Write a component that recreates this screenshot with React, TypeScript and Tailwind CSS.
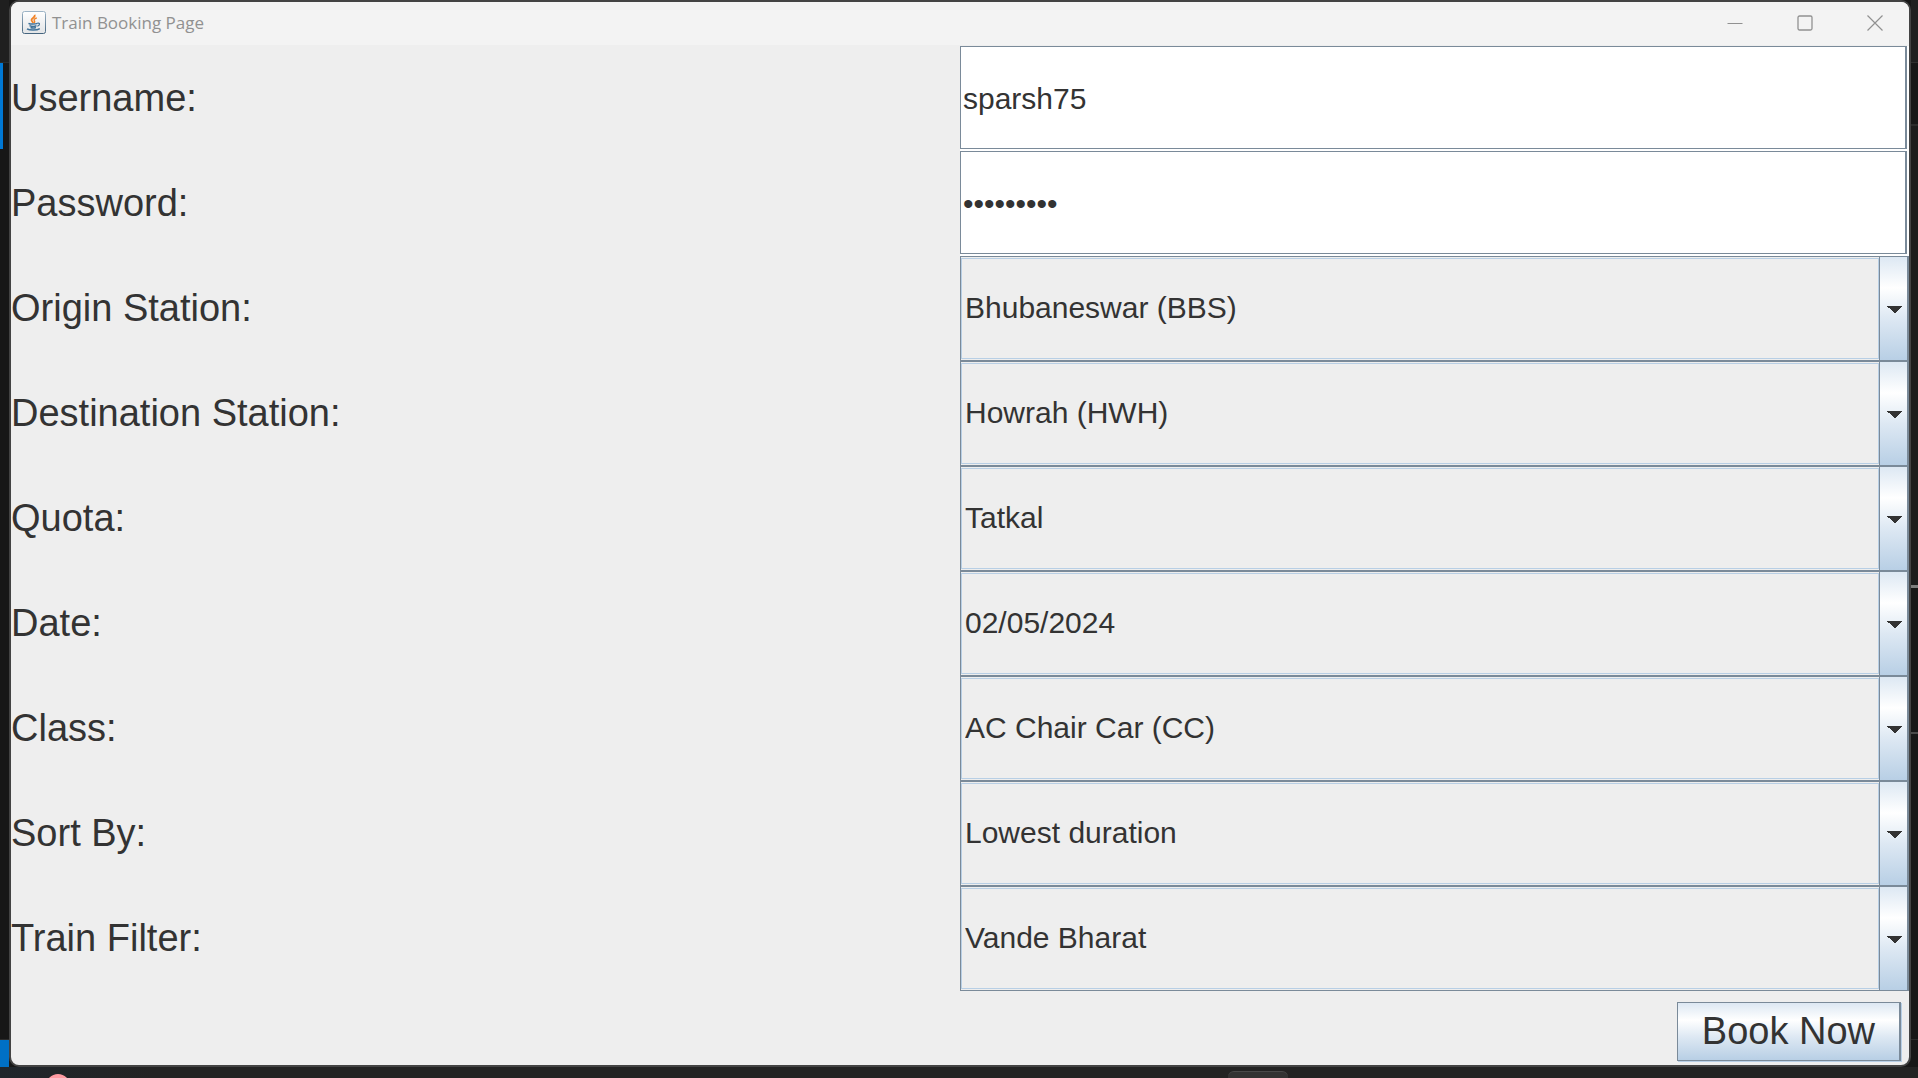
import { useState } from "react";

const fields = [
  { id: "origin", label: "Origin Station:", options: ["Bhubaneswar (BBS)", "Howrah (HWH)"], initial: "Bhubaneswar (BBS)" },
  { id: "destination", label: "Destination Station:", options: ["Howrah (HWH)", "Bhubaneswar (BBS)"], initial: "Howrah (HWH)" },
  { id: "quota", label: "Quota:", options: ["Tatkal"], initial: "Tatkal" },
  { id: "date", label: "Date:", options: ["02/05/2024"], initial: "02/05/2024" },
  { id: "class", label: "Class:", options: ["AC Chair Car (CC)"], initial: "AC Chair Car (CC)" },
  { id: "sort", label: "Sort By:", options: ["Lowest duration"], initial: "Lowest duration" },
  { id: "filter", label: "Train Filter:", options: ["Vande Bharat"], initial: "Vande Bharat" },
];

const metal = "bg-[linear-gradient(to_bottom,#dde8f3_0%,#ffffff_30%,#dde8f3_60%,#b8cfe5_100%)]";

function FieldLabel({ id, children }: { id: string; children: string }) {
  return (
    <label htmlFor={id} className="flex h-[105px] items-center pb-0.5 text-[38px] leading-none whitespace-nowrap">
      {children}
    </label>
  );
}

function TextField({ id, type, initial }: { id: string; type: string; initial: string }) {
  const [value, setValue] = useState(initial);
  return (
    <div className="h-[105px] bg-white pr-0.5 pb-0.5">
      <input
        id={id}
        type={type}
        value={value}
        onChange={(e) => setValue(e.target.value)}
        className="block h-full w-full border border-r-2 border-[#7a8a99] bg-white pt-0.5 pl-0.5 text-[30px] outline-none"
      />
    </div>
  );
}

function ComboBox({ id, options, initial }: { id: string; options: string[]; initial: string }) {
  const [value, setValue] = useState(initial);
  return (
    <div className="flex h-[105px] border border-r-2 border-[#7a8a99]">
      <div className="min-w-0 flex-1 pt-px pb-px">
        <select
          id={id}
          value={value}
          onChange={(e) => setValue(e.target.value)}
          className="block h-full w-full appearance-none border border-[#b8cfe5] bg-[#eeeeee] pb-0.5 pl-[3px] text-[30px] outline-none"
        >
          {options.map((o) => (
            <option key={o}>{o}</option>
          ))}
        </select>
      </div>
      <div aria-hidden="true" className={`flex w-7 items-center justify-end border-l border-[#7a8a99] pt-0.5 pr-[5px] ${metal}`}>
        <svg width="15" height="7" viewBox="0 0 15 7" shapeRendering="crispEdges">
          <path d="M0 0H15V1H14V2H13L8 7H7L2 2H1V1H0Z" fill="#333333" />
        </svg>
      </div>
    </div>
  );
}

function JavaIcon() {
  return (
    <svg width="24" height="24" viewBox="0 0 24 24" fill="none" aria-hidden="true">
      <defs>
        <linearGradient id="frame" x1="0" y1="0" x2="0" y2="1">
          <stop offset="0" stopColor="#9db4c6" />
          <stop offset="1" stopColor="#45657f" />
        </linearGradient>
        <linearGradient id="tile" x1="0" y1="0" x2="0" y2="1">
          <stop offset="0" stopColor="#ffffff" />
          <stop offset="1" stopColor="#e2e4e6" />
        </linearGradient>
      </defs>
      <rect x="0.5" y="0.5" width="23" height="22" rx="2" fill="url(#tile)" stroke="url(#frame)" />
      <path d="M12.8 3.800C13.500 6.500 9.200 7.200 9.500 9.200C9.700 10.300 11 10.800 11.200 12" stroke="#f08226" strokeWidth="1.800" />
      <path d="M14.800 6.800C12 7.800 11.500 8.800 12.500 10C13 10.700 12.800 11.400 12.200 12" stroke="#f08226" strokeWidth="1.300" />
      <path d="M6.500 12.300C8 13.300 13.500 13.300 15.500 12.300M7.500 14.600C9.500 15.500 12.800 15.500 14.500 14.600M8.500 16.500C10 17.200 12.300 17.200 14 16.500" stroke="#3f7299" strokeWidth="1.400" />
      <path d="M15.300 12.200C18.300 11.300 18.200 14.400 15.300 15.300" stroke="#3f7299" strokeWidth="1.200" />
      <path d="M5 17.800C7.500 19.500 15 19.500 17.800 17.600" stroke="#3f7299" strokeWidth="1.400" />
    </svg>
  );
}

function TitleBar() {
  return (
    <header className="flex h-[43px] items-center justify-between bg-[#f3f3f3] pr-[26px] pl-[11px] text-[#919191]">
      <div className="flex items-center gap-1.5 pb-0.5">
        <JavaIcon />
        <h1 className="font-['Open_Sans','Noto_Sans',sans-serif] text-[17px] leading-6">Train Booking Page</h1>
      </div>
      <div className="flex items-center gap-[54px] pb-0.5">
        <button type="button" aria-label="Minimize">
          <svg width="16" height="16" viewBox="0 0 16 16" fill="none" stroke="currentColor" className="block">
            <path d="M0.500 8.500H15.500" />
          </svg>
        </button>
        <button type="button" aria-label="Maximize">
          <svg width="16" height="16" viewBox="0 0 16 16" fill="none" stroke="currentColor" className="block">
            <rect x="1" y="1" width="14" height="14" rx="1.500" strokeWidth="1.300" />
          </svg>
        </button>
        <button type="button" aria-label="Close">
          <svg width="16" height="16" viewBox="0 0 16 16" fill="none" stroke="currentColor" className="block">
            <path d="M0.500 0.500L15.500 15.500M15.500 0.500L0.500 15.500" strokeWidth="1.200" />
          </svg>
        </button>
      </div>
    </header>
  );
}

export default function App() {
  return (
    <div className="flex min-h-screen flex-col bg-[#171717] font-['Liberation_Sans',Arial,sans-serif] text-[#333333]">
      <div className="flex flex-1">
        <div className="flex w-[9px] flex-col">
          <div className="h-[63px] border-b border-[#2b2b2b] bg-[#1f1f1f]" />
          <div className="h-[86px] w-[3px] bg-[#0078d4]" />
          <div className="flex-1" />
          <div className="h-7 border-t border-[#2b2b2b] bg-[#0070c5]" />
        </div>
        <main className="flex min-w-0 flex-1 flex-col overflow-hidden rounded-[10px] border-2 border-[#434343] bg-[#eeeeee]">
          <TitleBar />
          <form className="flex flex-1 flex-col pt-px" onSubmit={(e) => e.preventDefault()}>
            <div className="grid grid-cols-2">
              <FieldLabel id="username">Username:</FieldLabel>
              <TextField id="username" type="text" initial="sparsh75" />
              <FieldLabel id="password">Password:</FieldLabel>
              <TextField id="password" type="password" initial="trainpass" />
              {fields.map((f) => (
                <div key={f.id} className="col-span-2 grid grid-cols-2">
                  <FieldLabel id={f.id}>{f.label}</FieldLabel>
                  <ComboBox id={f.id} options={f.options} initial={f.initial} />
                </div>
              ))}
            </div>
            <div className="flex flex-1 items-center justify-end pt-1.5 pr-2">
              <button
                type="submit"
                className={`h-[59px] border border-r-2 border-[#7a8a99] px-6 text-[38px] leading-none whitespace-nowrap shadow-[1px_1px_0_#b8cfe5] ${metal}`}
              >
                Book Now
              </button>
            </div>
          </form>
        </main>
        <div className="flex w-[7px] flex-col">
          <div className="h-[63px] border-b border-[#2f2f2f] bg-[#1f1f1f]" />
          <div className="h-[63px] border-b-2 border-[#2b2b2b]" />
          <div className="h-[462px] border-b-3 border-[#7d7d7d] bg-[#1c1c1c]" />
          <div className="h-[146px] border-b-2 border-[#4a4a4a]" />
          <div className="h-[306px] border-b border-[#2b2b2b]" />
        </div>
      </div>
      <footer className="flex h-[11px] items-start justify-between overflow-hidden bg-[linear-gradient(to_right,#20262c,#232323_8%)] pr-[630px] pl-[46px]">
        <div className="mt-[7px] h-6 w-6 rounded-full bg-[#ff9aa2]" />
        <div className="mt-1 h-3 w-[60px] rounded-t-md border-t border-[#4a4a4a] bg-[#333333]" />
      </footer>
    </div>
  );
}
